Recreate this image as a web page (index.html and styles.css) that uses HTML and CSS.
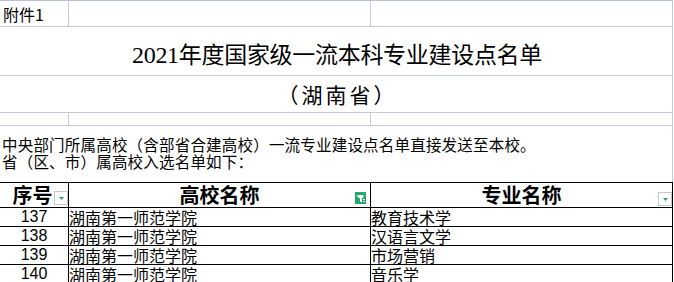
FILE: index.html
```html
<!DOCTYPE html>
<html lang="zh-CN">
<head>
<meta charset="utf-8">
<title>2021年度国家级一流本科专业建设点名单</title>
<link rel="stylesheet" href="styles.css">
</head>
<body>
<div class="sheet">
  <div class="grid-row row-top">
    <div class="cell">附件1</div>
    <div class="cell"></div>
    <div class="cell"></div>
  </div>
  <div class="merged title"><span class="num">2021</span>年度国家级一流本科专业建设点名单</div>
  <div class="merged subtitle">（湖南省）</div>
  <div class="grid-row row-blank">
    <div class="cell"></div>
    <div class="cell"></div>
    <div class="cell"></div>
  </div>
  <div class="merged note">
    <div class="note-line">中央部门所属高校（含部省合建高校）一流专业建设点名单直接发送至本校。</div>
    <div class="note-line">省（区、市）属高校入选名单如下：</div>
  </div>

  <div class="table">
    <div class="t-row t-head">
      <div class="t-cell h-a">序号<span class="dropdown"><svg width="5" height="3" viewBox="0 0 5 3"><polygon points="0,0 5,0 2.5,3" fill="#2ea56b"/></svg></span></div>
      <div class="t-cell">高校名称<span class="filter"><svg width="11" height="12" viewBox="0 0 11 12"><rect width="11" height="12" fill="#23a86c"/><path d="M2.5 3H8.5V5L7 6.5V10H5V6.5L2.5 5Z" fill="#fff"/><rect x="8.3" y="7" width="1.6" height="1" fill="#fff"/><rect x="8.3" y="9" width="1.6" height="1" fill="#fff"/></svg></span></div>
      <div class="t-cell">专业名称<span class="dropdown"><svg width="5" height="3" viewBox="0 0 5 3"><polygon points="0,0 5,0 2.5,3" fill="#2ea56b"/></svg></span></div>
    </div>
    <div class="t-row">
      <div class="t-cell c-num">137</div>
      <div class="t-cell c-text">湖南第一师范学院</div>
      <div class="t-cell c-text">教育技术学</div>
    </div>
    <div class="t-row">
      <div class="t-cell c-num">138</div>
      <div class="t-cell c-text">湖南第一师范学院</div>
      <div class="t-cell c-text">汉语言文学</div>
    </div>
    <div class="t-row">
      <div class="t-cell c-num">139</div>
      <div class="t-cell c-text">湖南第一师范学院</div>
      <div class="t-cell c-text">市场营销</div>
    </div>
    <div class="t-row">
      <div class="t-cell c-num">140</div>
      <div class="t-cell c-text">湖南第一师范学院</div>
      <div class="t-cell c-text">音乐学</div>
    </div>
  </div>
</div>
</body>
</html>
```

FILE: styles.css
```css
* {
  box-sizing: border-box;
}

html, body {
  margin: 0;
  padding: 0;
  background: #ffffff;
  overflow: hidden;
}

body {
  font-family: "Noto Sans CJK SC", "Noto Sans", sans-serif;
  color: #000000;
  text-spacing-trim: space-all;
}

.sheet {
  width: 673px;
  border-top: 1px solid #b7c0d4;
}

.grid-row {
  display: grid;
  grid-template-columns: 69px 302px 302px;
  border-bottom: 1px solid #c3cadc;
}

.cell {
  border-right: 1px solid #c3cadc;
}

.row-top {
  height: 26px;
}

.row-top .cell:first-child {
  font-size: 16px;
  line-height: 24px;
  padding-top: 1px;
  padding-left: 3px;
}

.row-blank {
  height: 13px;
}

.merged {
  border-right: 1px solid #c3cadc;
  border-bottom: 1px solid #c3cadc;
  text-align: center;
}

.title {
  height: 49px;
  font-size: 23px;
  line-height: 48px;
  padding-top: 2px;
  letter-spacing: -0.3px;
  padding-left: 2px;
}

.title .num {
  font-family: "Liberation Serif", serif;
  font-size: 24px;
}

.subtitle {
  height: 37px;
  font-size: 21px;
  letter-spacing: 3px;
  padding-left: 3px;
  line-height: 36px;
}

.note {
  height: 56px;
  border-bottom: none;
  text-align: left;
  padding-top: 10px;
  padding-left: 2px;
  white-space: nowrap;
}

.note-line {
  font-size: 15.5px;
  letter-spacing: 0.2px;
  line-height: 16.5px;
  height: 16.5px;
}

.table {
  border-top: 1px solid #000000;
}

.t-row {
  display: grid;
  grid-template-columns: 69px 302px 302px;
  height: 19px;
  border-bottom: 1px solid #000000;
}

.t-cell {
  position: relative;
  border-right: 1px solid #000000;
  font-size: 16px;
  line-height: 18px;
  white-space: nowrap;
}

.t-head {
  height: 25px;
}

.t-head .t-cell {
  font-size: 20px;
  font-weight: 700;
  line-height: 24px;
  text-align: center;
}

.t-head .h-a {
  padding-right: 3px;
}

.c-num {
  font-family: "Liberation Sans", sans-serif;
  text-align: center;
  font-size: 16px;
}

.c-text {
  padding-left: 0;
}

.dropdown {
  position: absolute;
  right: 0;
  top: 8px;
  width: 14px;
  height: 14px;
  border: 1px solid #c8c8c8;
  background: #ffffff;
  display: flex;
  align-items: center;
  justify-content: center;
  line-height: 0;
}

.t-head .t-cell:last-child .dropdown {
  top: 9px;
}

.filter {
  position: absolute;
  right: 4px;
  top: 9px;
  width: 11px;
  height: 12px;
  line-height: 0;
}
```
